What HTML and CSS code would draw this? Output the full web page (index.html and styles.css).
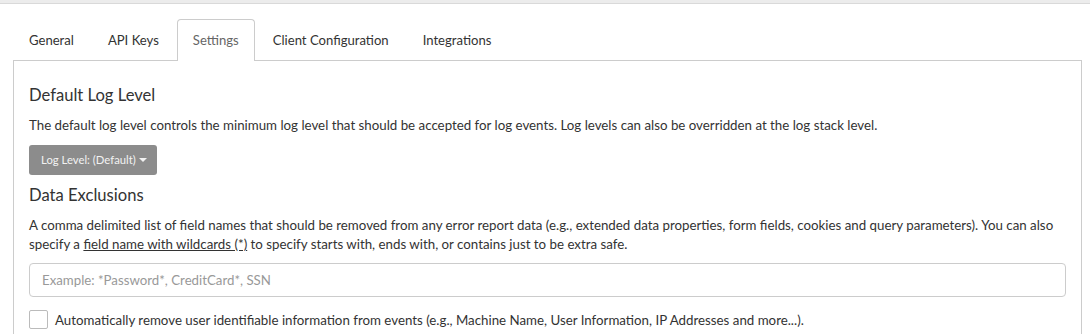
FILE: index.html
```html
<!DOCTYPE html>
<html lang="en">
<head>
    <meta charset="UTF-8">
    <title>Settings</title>
    <link rel="stylesheet" href="styles.css">
</head>
<body>
    <div class="topbar"></div>

    <div class="page">
        <ul class="tabs">
            <li class="tab">General</li>
            <li class="tab">API Keys</li>
            <li class="tab active">Settings</li>
            <li class="tab">Client Configuration</li>
            <li class="tab">Integrations</li>
        </ul>

        <div class="panel">
            <h4 class="section-title">Default Log Level</h4>
            <p class="help">The default log level controls the minimum log level that should be accepted for log events. Log levels can also be overridden at the log stack level.</p>
            <button class="btn-level">Log Level: (Default) <span class="caret"></span></button>

            <h4 class="section-title">Data Exclusions</h4>
            <p class="help">A comma delimited list of field names that should be removed from any error report data (e.g., extended data properties, form fields, cookies and query parameters). You can also specify a <a href="#">field name with wildcards (*)</a> to specify starts with, ends with, or contains just to be extra safe.</p>
            <input class="text-input" type="text" placeholder="Example: *Password*, CreditCard*, SSN">

            <label class="check-row">
                <span class="check-box"></span>
                Automatically remove user identifiable information from events (e.g., Machine Name, User Information, IP Addresses and more...).
            </label>
        </div>
    </div>
</body>
</html>
```

FILE: styles.css
```css
body {
    margin: 0;
    background: #fff;
    color: #333;
    font-family: Lato, "Open Sans", sans-serif;
    font-size: 13.3px;
}

.topbar {
    height: 3px;
    background: #ececec;
    border-bottom: 1px solid #d9d9d9;
}

.page {
    padding: 15px 8px 0 13px;
}

/* tabs */
.tabs {
    display: flex;
    gap: 2px;
    list-style: none;
    margin: 0;
    padding: 0;
}

.tab {
    padding: 10px 15px;
    line-height: 20px;
    font-size: 13.1px;
    color: #333;
    border: 1px solid transparent;
    border-bottom: none;
    border-radius: 4px 4px 0 0;
}

.tab.active {
    color: #666;
    background: #fff;
    border-color: #ccc;
    margin-bottom: -1px;
    padding-bottom: 11px;
    position: relative;
}

/* panel */
.panel {
    border: 1px solid #ccc;
    padding: 23.5px 15px 15px;
    min-height: 260px;
}

.section-title {
    margin: 0 0 11px;
    font-size: 16.6px;
    font-weight: normal;
    line-height: 20px;
}

.help {
    margin: 0;
    line-height: 19.5px;
}

.help a {
    color: #333;
}

.btn-level {
    display: flex;
    align-items: center;
    margin: 9.5px 0 10px;
    height: 30px;
    padding: 0 10px 0 12px;
    font-family: inherit;
    font-size: 11.3px;
    color: #f2f2f2;
    background: #8c8c8c;
    border: none;
    border-radius: 3px;
}

.caret {
    margin-left: 3px;
    border-top: 4px solid #f2f2f2;
    border-left: 4px solid transparent;
    border-right: 4px solid transparent;
}

.text-input {
    display: block;
    box-sizing: border-box;
    width: 100%;
    height: 34px;
    margin: 8.5px 0 13px;
    padding: 6px 12px;
    font-family: inherit;
    font-size: 13.25px;
    border: 1px solid #ccc;
    border-radius: 4px;
}

.text-input::placeholder {
    color: #999;
}

.check-row {
    display: flex;
    align-items: center;
    gap: 7px;
}

.check-box {
    width: 19px;
    height: 19px;
    box-sizing: border-box;
    border: 1px solid #bbb;
    border-radius: 2px;
}
```
